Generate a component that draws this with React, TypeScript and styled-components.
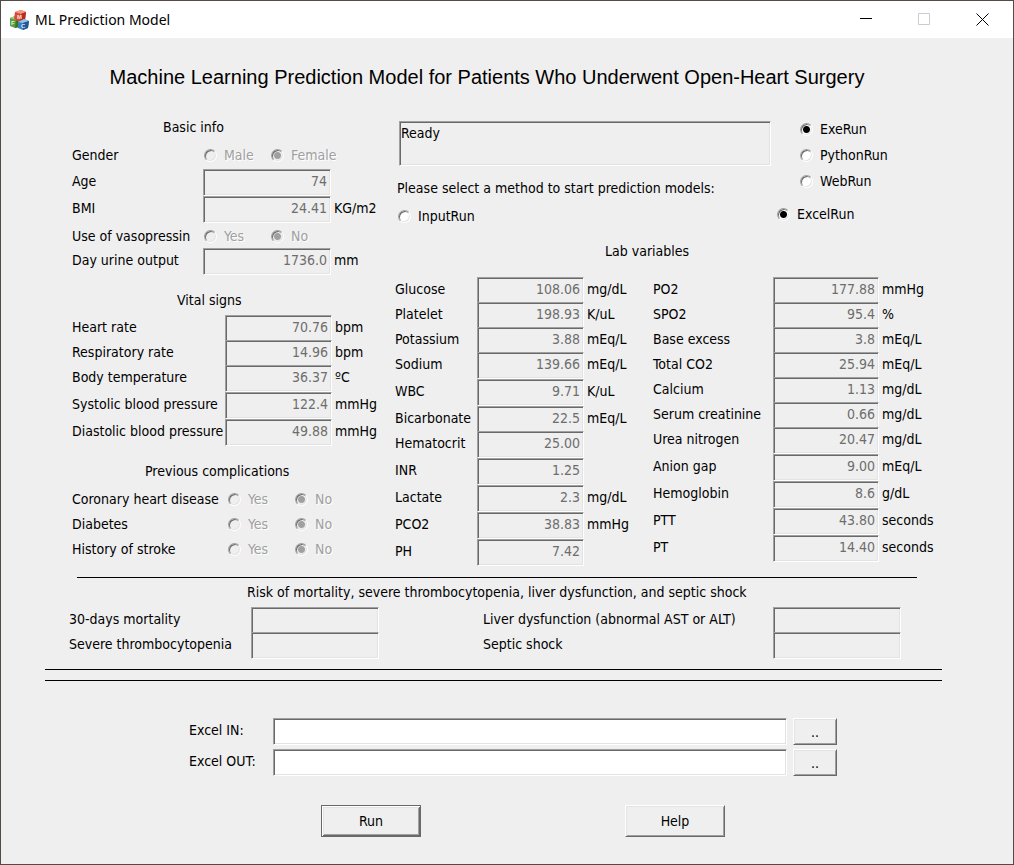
import React, { useState } from "react";
import styled, { createGlobalStyle, css } from "styled-components";

const GlobalStyle = createGlobalStyle`
  * { box-sizing: border-box; }
  body {
    margin: 0;
    background: #efefef;
    color: #000;
    font-family: "DejaVu Sans Condensed", "DejaVu Sans", "Noto Sans", sans-serif;
    font-size: 14px;
    line-height: 22px;
  }
  input, textarea, button { font: inherit; }
`;

const sunken = css`
  border: 1px solid;
  border-color: #a0a0a0 #fff #fff #a0a0a0;
  border-radius: 0;
  box-shadow: inset 1px 1px 0 #696969, inset -1px -1px 0 #e3e3e3;
`;

const Window = styled.div`
  min-height: 100vh;
  border: 1px solid #544b46;
  background: #efefef;
`;

const TitleBar = styled.header`
  display: flex;
  align-items: center;
  height: 37px;
  padding: 0 2px 0 8px;
  background: #fff;
`;

const AppName = styled.span`
  flex: 1;
  padding-left: 5px;
  font-family: "Noto Sans", "Open Sans", sans-serif;
`;

const WindowButton = styled.button`
  display: flex;
  align-items: center;
  justify-content: center;
  width: 58px;
  height: 37px;
  padding: 0;
  border: 0;
  background: transparent;
`;

const Heading = styled.h1`
  margin: 0;
  padding: 27px 40px 0 0;
  font: 400 20px/24px "Liberation Sans", Arial, sans-serif;
  text-align: center;
`;

const Columns = styled.div`
  display: grid;
  grid-template-columns: 323fr 618fr;
  padding: 27px 0 0 71px;
`;

const Patient = styled.div`
  display: flex;
  flex-direction: column;
  gap: 14px;
`;

const SectionTitle = styled.h2<{ $indent: number; $roomy?: boolean }>`
  margin: 0 0 ${(p) => (p.$roomy ? 15 : 4)}px;
  padding-left: ${(p) => p.$indent}px;
  font-size: 14px;
  font-weight: 400;
  line-height: 22px;
`;

const Row = styled.div<{ $label: number; $field?: number; $tight?: boolean }>`
  display: grid;
  grid-template-columns: ${(p) => p.$label}px ${(p) => (p.$field ? `${p.$field}px` : "auto")} 1fr;
  align-items: center;
  height: ${(p) => (p.$tight ? 25 : 27)}px;
  white-space: nowrap;
  > :not(input) { padding-bottom: 3px; }
`;

const Field = styled.input`
  ${sunken}
  width: 100%;
  height: 27px;
  padding: 0 3px 3px;
  background: #efefef;
  color: #6d6d6d;
  text-align: right;
`;

const Unit = styled.span`
  padding-left: 3px;
`;

const Options = styled.div`
  display: flex;
`;

const OptionLabel = styled.label<{ $off?: boolean }>`
  display: flex;
  align-items: center;
  gap: 7px;
  min-width: 67px;
  height: 26px;
  ${(p) => p.$off && "color: #a0a0a0; text-shadow: 1px 1px 0 #fff;"}
`;

const Radio = styled.input`
  appearance: none;
  flex: none;
  width: 13px;
  height: 13px;
  margin: 0 0 0 1px;
  border: 1px solid;
  border-color: #a0a0a0 #fff #fff #a0a0a0;
  border-radius: 50%;
  background: #fff;
  box-shadow: inset 1px 1px 0 #696969, inset -1px -1px 0 #e3e3e3;
  &:checked {
    background: radial-gradient(circle, #000 0 3px, #fff 4px);
  }
  &:disabled { background: #efefef; }
  &:disabled:checked {
    background: radial-gradient(circle, #a0a0a0 0 3px, #efefef 4px);
  }
`;

const RunPanel = styled.div`
  display: grid;
  grid-template-columns: 381fr 237fr;
  margin-bottom: 11px;
`;

const StatusSide = styled.div`
  padding: 5px 5px 0 2px;
`;

const Status = styled.textarea`
  ${sunken}
  display: block;
  width: calc(100% - 2px);
  height: 45px;
  margin-left: 2px;
  padding: 0 1px;
  background: #efefef;
  resize: none;
`;

const Prompt = styled.p`
  margin: 11px 0 4px;
`;

const Runners = styled.div`
  padding-left: 23px;
  margin-bottom: 7px;
`;

const Labs = styled.div`
  display: grid;
  grid-template-columns: 258fr 360fr;
`;

const Rule = styled.hr<{ $wide?: boolean }>`
  height: 1px;
  margin: ${(p) => (p.$wide ? "10px 71px 0 44px" : "11px 96px 3px 76px")};
  border: 0;
  background: #000;
`;

const Outcomes = styled.div`
  display: grid;
  grid-template-columns: 414fr 530fr;
  padding-left: 68px;
`;

const Files = styled.div`
  display: flex;
  flex-direction: column;
  gap: 4px;
  padding: 37px 176px 0 188px;
`;

const FileRow = styled.div`
  display: grid;
  grid-template-columns: 84px 1fr 6px 44px;
  align-items: center;
  > label { padding-bottom: 3px; }
`;

const PathBox = styled.input`
  ${sunken}
  width: 100%;
  height: 27px;
  padding: 0 4px;
  background: #fff;
`;

const Button = styled.button<{ $default?: boolean }>`
  height: 27px;
  padding: 0;
  border: 1px solid;
  border-color: #fff #696969 #696969 #fff;
  background: #efefef;
  box-shadow: inset 1px 1px 0 #e3e3e3, inset -1px -1px 0 #a0a0a0;
  color: #000;
  ${(p) =>
    p.$default &&
    css`
      border-color: #696969;
      box-shadow: inset 1px 1px 0 #fff, inset -1px -1px 0 #696969,
        inset 2px 2px 0 #e3e3e3, inset -2px -2px 0 #a0a0a0;
    `}
`;

const BrowseButton = styled(Button)`
  grid-column: 4;
`;

const Actions = styled.div`
  display: grid;
  grid-template-columns: 304fr 388fr;
  padding: 29px 0 27px 320px;
  ${Button} { width: 100px; height: 32px; }
`;

type Entry = { name: string; value: string; unit?: string; tight?: boolean };

const vitals: Entry[] = [
  { name: "Heart rate", value: "70.76", unit: "bpm", tight: true },
  { name: "Respiratory rate", value: "14.96", unit: "bpm", tight: true },
  { name: "Body temperature", value: "36.37", unit: "ºC" },
  { name: "Systolic blood pressure", value: "122.4", unit: "mmHg" },
  { name: "Diastolic blood pressure", value: "49.88", unit: "mmHg" },
];

const labsA: Entry[] = [
  { name: "Glucose", value: "108.06", unit: "mg/dL", tight: true },
  { name: "Platelet", value: "198.93", unit: "K/uL", tight: true },
  { name: "Potassium", value: "3.88", unit: "mEq/L", tight: true },
  { name: "Sodium", value: "139.66", unit: "mEq/L" },
  { name: "WBC", value: "9.71", unit: "K/uL" },
  { name: "Bicarbonate", value: "22.5", unit: "mEq/L", tight: true },
  { name: "Hematocrit", value: "25.00" },
  { name: "INR", value: "1.25" },
  { name: "Lactate", value: "2.3", unit: "mg/dL" },
  { name: "PCO2", value: "38.83", unit: "mmHg" },
  { name: "PH", value: "7.42" },
];

const labsB: Entry[] = [
  { name: "PO2", value: "177.88", unit: "mmHg", tight: true },
  { name: "SPO2", value: "95.4", unit: "%", tight: true },
  { name: "Base excess", value: "3.8", unit: "mEq/L", tight: true },
  { name: "Total CO2", value: "25.94", unit: "mEq/L", tight: true },
  { name: "Calcium", value: "1.13", unit: "mg/dL", tight: true },
  { name: "Serum creatinine", value: "0.66", unit: "mg/dL", tight: true },
  { name: "Urea nitrogen", value: "20.47", unit: "mg/dL" },
  { name: "Anion gap", value: "9.00", unit: "mEq/L" },
  { name: "Hemoglobin", value: "8.6", unit: "g/dL" },
  { name: "PTT", value: "43.80", unit: "seconds" },
  { name: "PT", value: "14.40", unit: "seconds" },
];

const slug = (s: string) => s.toLowerCase().replace(/[^a-z0-9]+/g, "-");

function Measure({ entry, label, field }: { entry: Entry; label: number; field: number }) {
  const id = slug(entry.name);
  return (
    <Row $label={label} $field={field} $tight={entry.tight}>
      <label htmlFor={id}>{entry.name}</label>
      <Field id={id} defaultValue={entry.value} disabled />
      {entry.unit && <Unit>{entry.unit}</Unit>}
    </Row>
  );
}

function Choice(props: { name: string; options: string[]; label: number; tight?: boolean }) {
  return (
    <Row $label={props.label} $tight={props.tight} role="radiogroup" aria-label={props.name}>
      <span>{props.name}</span>
      <Options>
        {props.options.map((text, i) => (
          <OptionLabel key={text} $off>
            <Radio type="radio" name={slug(props.name)} defaultChecked={i === 1} disabled />
            {text}
          </OptionLabel>
        ))}
      </Options>
    </Row>
  );
}

function CubesIcon() {
  return (
    <svg width="21" height="22" viewBox="0 0 21 22" aria-hidden="true">
      <path d="M1 9 6 7l5 2-1 9-4 1-5-2z" fill="#5c9e43" />
      <path d="M1 9 6 7l5 2-4 2z" fill="#a3d27f" />
      <path d="m7 11 4-2-1 9-4 1z" fill="#37752b" />
      <path d="m6 3 6-2 5 2-1 8-5 2-6-3z" fill="#d94a35" />
      <path d="m6 3 6-2 5 2-5 2z" fill="#f29a82" />
      <path d="m12 5 5-2-1 8-5 2z" fill="#b52c20" />
      <path d="m9 13 6-3 5 2-1 7-5 2-5-2z" fill="#3b7fbd" />
      <path d="m9 13 6-3 5 2-6 2z" fill="#91c4e8" />
      <path d="m14 14 6-2-1 7-5 2z" fill="#205796" />
      <g fill="#fff" fillOpacity="0.85" fontFamily="Liberation Sans, sans-serif" fontWeight="700" fontSize="6">
        <text x="8" y="10">M</text>
        <text x="2" y="16">F</text>
        <text x="12" y="19">C</text>
      </g>
    </svg>
  );
}

export default function App() {
  const [runner, setRunner] = useState("ExeRun");
  const [method, setMethod] = useState("ExcelRun");

  const methodOption = (text: string) => (
    <OptionLabel>
      <Radio type="radio" name="method" checked={method === text} onChange={() => setMethod(text)} />
      {text}
    </OptionLabel>
  );

  return (
    <>
      <GlobalStyle />
      <Window>
        <TitleBar>
          <CubesIcon />
          <AppName>ML Prediction Model</AppName>
          <WindowButton aria-label="Minimize">
            <svg width="13" height="13" stroke="#000"><path d="M0 5.5h12" /></svg>
          </WindowButton>
          <WindowButton aria-label="Maximize" disabled>
            <svg width="13" height="13" fill="none" stroke="#ccc"><path d="M.5.5h11v11H.5z" /></svg>
          </WindowButton>
          <WindowButton aria-label="Close">
            <svg width="13" height="13" stroke="#000"><path d="m.5.5 12 12m0-12-12 12" /></svg>
          </WindowButton>
        </TitleBar>

        <main>
          <Heading>Machine Learning Prediction Model for Patients Who Underwent Open-Heart Surgery</Heading>

          <Columns>
            <Patient>
              <section>
                <SectionTitle $indent={91}>Basic info</SectionTitle>
                <Choice name="Gender" options={["Male", "Female"]} label={131} />
                <Measure entry={{ name: "Age", value: "74" }} label={131} field={128} />
                <Measure entry={{ name: "BMI", value: "24.41", unit: "KG/m2" }} label={131} field={128} />
                <Choice name="Use of vasopressin" options={["Yes", "No"]} label={131} tight />
                <Measure entry={{ name: "Day urine output", value: "1736.0", unit: "mm" }} label={131} field={128} />
              </section>
              <section>
                <SectionTitle $indent={105}>Vital signs</SectionTitle>
                {vitals.map((v) => <Measure key={v.name} entry={v} label={153} field={107} />)}
              </section>
              <section>
                <SectionTitle $indent={73}>Previous complications</SectionTitle>
                {["Coronary heart disease", "Diabetes", "History of stroke"].map((name) => (
                  <Choice key={name} name={name} options={["Yes", "No"]} label={155} tight />
                ))}
              </section>
            </Patient>

            <div>
              <RunPanel>
                <StatusSide>
                  <Status aria-label="Status" defaultValue="Ready" readOnly />
                  <Prompt>Please select a method to start prediction models:</Prompt>
                  {methodOption("InputRun")}
                </StatusSide>
                <div>
                  <Runners>
                    {["ExeRun", "PythonRun", "WebRun"].map((text) => (
                      <OptionLabel key={text}>
                        <Radio type="radio" name="runner" checked={runner === text} onChange={() => setRunner(text)} />
                        {text}
                      </OptionLabel>
                    ))}
                  </Runners>
                  {methodOption("ExcelRun")}
                </div>
              </RunPanel>
              <SectionTitle $indent={210} $roomy>Lab variables</SectionTitle>
              <Labs>
                <div>{labsA.map((l) => <Measure key={l.name} entry={l} label={82} field={107} />)}</div>
                <div>{labsB.map((l) => <Measure key={l.name} entry={l} label={120} field={106} />)}</div>
              </Labs>
            </div>
          </Columns>

          <Rule />
          <SectionTitle $indent={246}>
            Risk of mortality, severe thrombocytopenia, liver dysfunction, and septic shock
          </SectionTitle>
          <Outcomes>
            <div>
              <Measure entry={{ name: "30-days mortality", value: "", tight: true }} label={182} field={128} />
              <Measure entry={{ name: "Severe thrombocytopenia", value: "" }} label={182} field={128} />
            </div>
            <div>
              <Measure entry={{ name: "Liver dysfunction (abnormal AST or ALT)", value: "", tight: true }} label={290} field={128} />
              <Measure entry={{ name: "Septic shock", value: "" }} label={290} field={128} />
            </div>
          </Outcomes>
          <Rule $wide />
          <Rule $wide />

          <Files>
            <FileRow>
              <label htmlFor="excel-in">Excel IN:</label>
              <PathBox id="excel-in" />
              <BrowseButton aria-label="Browse for input file">..</BrowseButton>
            </FileRow>
            <FileRow>
              <label htmlFor="excel-out">Excel OUT:</label>
              <PathBox id="excel-out" />
              <BrowseButton aria-label="Browse for output file">..</BrowseButton>
            </FileRow>
          </Files>
          <Actions>
            <Button $default>Run</Button>
            <Button>Help</Button>
          </Actions>
        </main>
      </Window>
    </>
  );
}
